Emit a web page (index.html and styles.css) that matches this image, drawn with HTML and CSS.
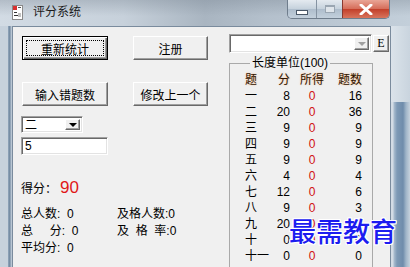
FILE: index.html
```html
<!DOCTYPE html>
<html lang="zh-CN">
<head>
    <meta charset="UTF-8">
    <title>评分系统</title>
    <link rel="stylesheet" href="styles.css">
</head>
<body>
    <div class="window">
        <div class="titlebar">
            <svg class="app-icon" width="11" height="15" viewBox="0 0 11 15">
                <rect x="0.5" y="0.5" width="10" height="14" fill="#fff" stroke="#8a8a8a"/>
                <rect x="1" y="1" width="4" height="4" fill="#d83030"/>
                <rect x="6" y="2" width="3" height="1" fill="#555"/>
                <rect x="2" y="7" width="3" height="1" fill="#333"/>
                <rect x="2" y="10" width="5" height="1" fill="#333"/>
                <rect x="6" y="8" width="3" height="4" fill="#c0c0c0"/>
            </svg>
            <span class="title">评分系统</span>
            <div class="caption-buttons">
                <div class="cap-btn cap-min"><span class="min-glyph"></span></div>
                <div class="cap-btn cap-max"><span class="max-glyph"></span></div>
                <div class="cap-btn cap-close">
                    <svg width="14" height="11" viewBox="0 0 14 11">
                        <path d="M2 1 L12 10 M12 1 L2 10" stroke="#fff" stroke-width="3" stroke-linecap="round"/>
                    </svg>
                </div>
            </div>
        </div>

        <div class="frame">
            <div class="frame-left"></div>

            <div class="client">
                <div class="left-panel">
                    <div class="btn-row">
                        <div class="btn btn-default btn-first">重新统计</div>
                        <div class="btn btn-second">注册</div>
                    </div>
                    <div class="btn-row row-two">
                        <div class="btn btn-first">输入错题数</div>
                        <div class="btn btn-second">修改上一个</div>
                    </div>

                    <div class="combo combo-small">
                        <span class="combo-text">二</span>
                        <span class="combo-arrow"><span class="tri"></span></span>
                    </div>
                    <div class="edit">5</div>

                    <div class="score">
                        <span>得分：</span>
                        <span class="score-value">90</span>
                    </div>

                    <div class="stats">
                        <span>总人数:  0</span>
                        <span>及格人数:0</span>
                        <span>总     分:  0</span>
                        <span>及  格  率:0</span>
                        <span>平均分:  0</span>
                    </div>
                </div>

                <div class="right-panel">
                    <div class="combo-row">
                        <div class="combo combo-wide">
                            <span class="combo-text"></span>
                            <span class="combo-arrow"><span class="tri tri-off"></span></span>
                        </div>
                        <div class="btn btn-e">E</div>
                    </div>

                    <fieldset class="group">
                        <legend>长度单位(100)</legend>
                        <div class="score-table" id="scoreTable">
                            <span class="hd">题</span>
                            <span class="hd num">分</span>
                            <span class="hd mid">所得</span>
                            <span class="hd num">题数</span>
                        </div>
                    </fieldset>
                </div>
            </div>

            <div class="frame-right">
                <div class="fr-top"></div>
                <div class="fr-bottom"></div>
            </div>
        </div>

        <div class="watermark">最需教育</div>
    </div>

    <script>
        // question rows: name, points, earned, count
        const rows = [
            ['一', 8, 0, 16],
            ['二', 20, 0, 36],
            ['三', 9, 0, 9],
            ['四', 9, 0, 9],
            ['五', 9, 0, 9],
            ['六', 4, 0, 4],
            ['七', 12, 0, 6],
            ['八', 9, 0, 3],
            ['九', 20, 0, 1],
            ['十', 0, 0, 0],
            ['十一', 0, 0, 0]
        ];

        const table = document.getElementById('scoreTable');
        let html = '';
        rows.forEach(r => {
            html += `<span>${r[0]}</span>`;
            html += `<span class="num">${r[1]}</span>`;
            html += `<span class="mid got">${r[2]}</span>`;
            html += `<span class="num">${r[3]}</span>`;
        });
        table.insertAdjacentHTML('beforeend', html);
    </script>
</body>
</html>
```

FILE: styles.css
```css
body {
    margin: 0;
    width: 410px;
    height: 267px;
    overflow: hidden;
    font-family: "Liberation Sans", "Noto Sans CJK SC", sans-serif;
    font-size: 12px;
    color: #000;
}
.window {
    position: relative;
    width: 410px;
    height: 267px;
    overflow: hidden;
}

/* title bar */
.titlebar {
    height: 26px;
    display: flex;
    align-items: flex-start;
    background:
        linear-gradient(to bottom, rgba(120,132,145,0.35) 0, rgba(120,132,145,0) 16px),
        linear-gradient(to right, #d2dbe4 0, #c7d1db 30%, #a9b5c1 50%, #b4c0cc 65%, #c3cfda 100%);
}
.app-icon {
    margin: 5px 0 0 12px;
}
.title {
    margin: 5px 0 0 10px;
    font-size: 12px;
    line-height: 15px;
    color: #1b1b1b;
}
.caption-buttons {
    margin-left: auto;
    margin-right: 20px;
    display: flex;
    height: 18px;
    border: 1px solid #6f7d8c;
    border-top: none;
    border-radius: 0 0 5px 5px;
    overflow: hidden;
}
.cap-btn {
    display: flex;
    align-items: center;
    justify-content: center;
    height: 18px;
}
.cap-min {
    width: 28px;
    background: linear-gradient(to bottom, #e4eaf0, #c5d1dc 50%, #aebdcc 51%, #c3d0dc);
    border-right: 1px solid #8593a2;
}
.cap-max {
    width: 25px;
    background: linear-gradient(to bottom, #e4eaf0, #c5d1dc 50%, #aebdcc 51%, #c3d0dc);
    border-right: 1px solid #8a3a30;
}
.cap-close {
    width: 46px;
    background: linear-gradient(to bottom, #e9a596, #d56c58 50%, #c23f2a 51%, #d8745c);
}
.min-glyph {
    width: 10px;
    height: 3px;
    margin-top: 6px;
    background: #fff;
    border: 1px solid #4a5868;
}
.max-glyph {
    width: 8px;
    height: 5px;
    border: 1px solid #9aa6b2;
    border-top-width: 2px;
    background: #dfe5eb;
}

/* frame */
.frame {
    display: flex;
    height: 241px;
}
.frame-left {
    width: 12px;
    background: linear-gradient(to right, #c6d1dc 0, #c6d1dc 8px, #93a8bd 8px, #6c839b 10px, #b9c6d3 11px, #b9c6d3 12px);
}
.frame-right {
    width: 19px;
    display: flex;
    flex-direction: column;
}
.fr-top {
    height: 76px;
    background: linear-gradient(to right, #dbe3ea 0, #c9d4de 100%);
}
.fr-bottom {
    flex: 1;
    background: linear-gradient(to right, #d3dce5 0, #d3dce5 2px, #a9bcce 3px, #7e9ab6 6px, #6f8cab 12px, #9fb4c8 15px, #c6d2dd 19px);
}

/* client area */
.client {
    width: 379px;
    box-sizing: border-box;
    display: flex;
    background: #f0f0f0;
    border: 1px solid #7a8b9d;
    border-bottom: none;
    overflow: hidden;
}
.left-panel {
    width: 216px;
    padding: 9px 0 0 8px;
    box-sizing: border-box;
}
.right-panel {
    flex: 1;
    padding-top: 7px;
}

/* buttons */
.btn-row {
    display: flex;
    height: 24px;
}
.row-two {
    margin-top: 22px;
}
.btn {
    box-sizing: border-box;
    display: flex;
    align-items: center;
    justify-content: center;
    background: #f0f0f0;
    border: 1px solid;
    border-color: #fff #696969 #696969 #fff;
    box-shadow: inset -1px -1px #a0a0a0;
    font-size: 12px;
}
.btn-first {
    width: 86px;
    margin-left: 1px;
}
.btn-second {
    width: 75px;
    margin-left: 25px;
}
.btn-default {
    border: 1px solid #000;
    box-shadow: inset 1px 1px #fff, inset -1px -1px #696969, inset -2px -2px #a0a0a0;
    outline: 1px dotted #000;
    outline-offset: -5px;
}
.btn-e {
    width: 16px;
    height: 17px;
    margin: 1px 0 0 1px;
    font-family: "Liberation Serif", serif;
    font-size: 12px;
}

/* combos and edits */
.combo, .edit {
    box-sizing: border-box;
    background: #fff;
    border: 1px solid;
    border-color: #a0a0a0 #fff #fff #a0a0a0;
    box-shadow: inset 1px 1px #696969, inset -1px -1px #e3e3e3;
}
.combo {
    display: flex;
    align-items: stretch;
    padding: 2px;
}
.combo-small {
    width: 62px;
    height: 17px;
    margin-top: 10px;
}
.combo-wide {
    width: 143px;
    height: 19px;
}
.combo-text {
    flex: 1;
    line-height: 13px;
    padding-left: 1px;
}
.combo-arrow {
    width: 15px;
    display: flex;
    align-items: center;
    justify-content: center;
    background: #f0f0f0;
    box-sizing: border-box;
    border: 1px solid;
    border-color: #fff #696969 #696969 #fff;
    box-shadow: inset -1px -1px #a0a0a0;
}
.tri {
    width: 0;
    height: 0;
    border-left: 4px solid transparent;
    border-right: 4px solid transparent;
    border-top: 4px solid #000;
}
.tri-off {
    border-top-color: #a0a0a0;
}
.edit {
    width: 87px;
    height: 18px;
    margin-top: 4px;
    padding: 0 0 0 3px;
    line-height: 17px;
}

/* score + stats */
.score {
    display: flex;
    align-items: baseline;
    height: 20px;
    margin-top: 23px;
    line-height: 20px;
}
.score-value {
    margin-left: 3px;
    font-size: 17px;
    color: #e01818;
}
.stats {
    display: grid;
    grid-template-columns: 96px auto;
    grid-auto-rows: 17px;
    margin-top: 8px;
    line-height: 17px;
    white-space: pre;
}

/* group box */
.combo-row {
    display: flex;
    align-items: flex-start;
}
.group {
    width: 144px;
    height: 230px;
    box-sizing: border-box;
    margin: 3px 0 0 0;
    padding: 2px 0 0 15px;
    border: 1px solid #a9a9a9;
    border-bottom: none;
}
.group legend {
    margin-left: 5px;
    padding: 0 2px;
    font-size: 12px;
    line-height: 14px;
}
.score-table {
    display: grid;
    grid-template-columns: 25px 20px 44px 28px;
    grid-auto-rows: 16px;
    line-height: 16px;
}
.num {
    text-align: right;
}
.mid {
    text-align: center;
}
.hd {
    color: #2e1400;
    text-shadow: 0 0 2px #f6b888;
}
.got {
    color: #d01010;
}

.watermark {
    position: absolute;
    left: 289px;
    top: 217px;
    font-family: "Noto Sans CJK SC", sans-serif;
    font-size: 27px;
    font-weight: 500;
    line-height: 27px;
    color: #1c1cf0;
    text-shadow: 1px 0 #fff, -1px 0 #fff, 0 1px #fff, 0 -1px #fff, 1px 1px #fff, -1px -1px #fff, 1px -1px #fff, -1px 1px #fff;
}
```
